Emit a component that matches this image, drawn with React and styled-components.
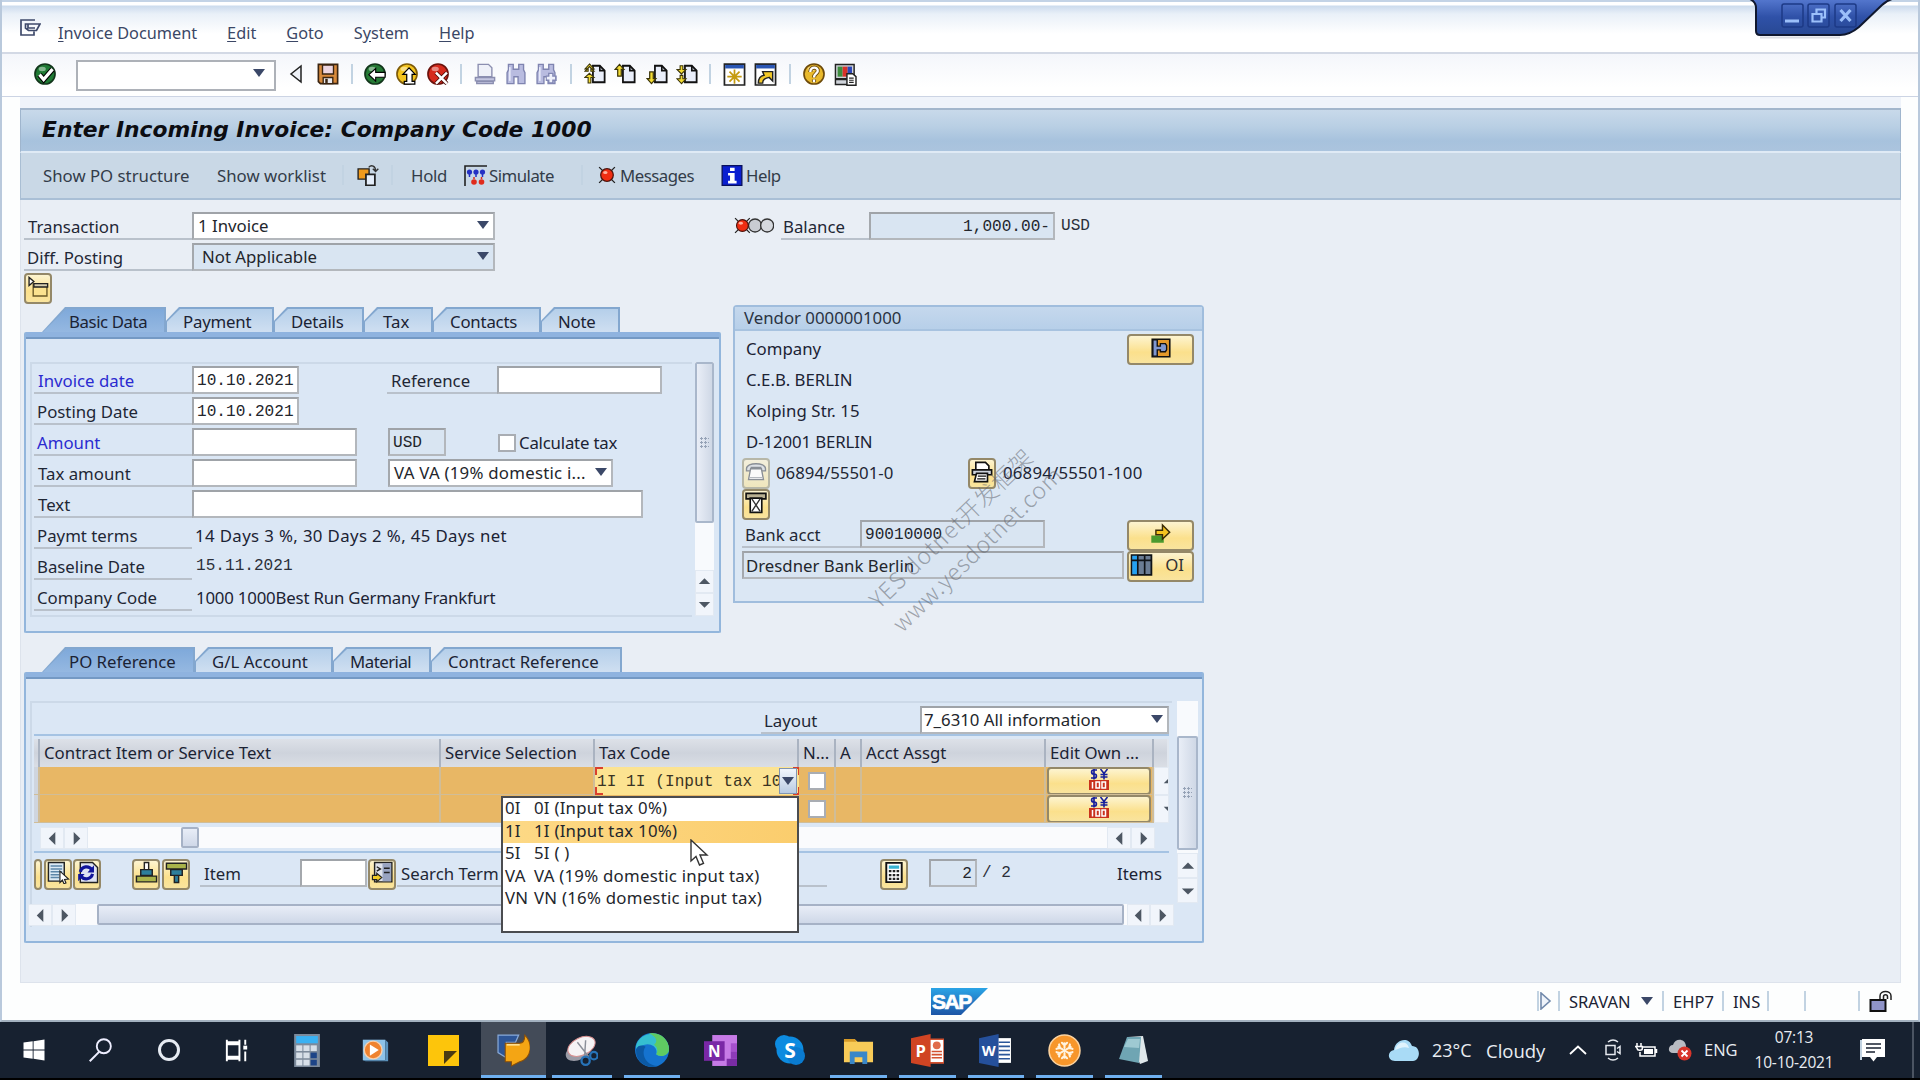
import React from 'react';
import styled, { createGlobalStyle, css } from 'styled-components';

const GlobalStyle = createGlobalStyle`
  * { box-sizing: border-box; }
  body {
    margin: 0;
    overflow: hidden;
    font-family: "Noto Sans", sans-serif;
    font-size: 16.8px;
    color: #1b2334;
  }
  svg { display: block; flex: none; }
`;

const ui = '"Noto Sans", sans-serif';
const mono = '"Liberation Mono", monospace';

// SHELL
const Screen = styled.div`
  position: relative;
  width: 1920px;
  height: 1080px;
  display: flex;
  flex-direction: column;
  overflow: hidden;
  background: #000;
  white-space: nowrap;
`;
const Window = styled.div`
  height: 1022px;
  display: flex;
  flex-direction: column;
  background: #fdfefe;
  border-left: 2px solid #b9c9dc;
  border-right: 2px solid #b9c9dc;
  border-bottom: 2px solid #a3b1bf;
`;
const MenuBar = styled.div`
  height: 54px;
  flex: none;
  display: flex;
  align-items: center;
  gap: 30px;
  padding: 11px 0 0 18px;
  color: #3b4766;
  font-size: 16.3px;
  border-top: 2px solid #c3d3e6;
  border-bottom: 2px solid #d3d9e5;
  background: linear-gradient(#fff 0 3px, #ccdbed 4px, #e9f0f8 12px, #fff 32px);
`;
const MenuIcon = styled.span`
  margin: -10px -13px 0 0;
`;
const Key = styled.span`
  text-decoration: underline;
  text-underline-offset: 2px;
`;
const ToolBar = styled.div`
  height: 43px;
  flex: none;
  display: flex;
  align-items: center;
  padding: 0 0 2px 32px;
  border-bottom: 1px solid #ccd4e4;
  background: linear-gradient(#f4f6fb, #fff 80%);
`;
const CommandField = styled.div`
  width: 200px;
  height: 31px;
  margin: 2px 13px 0 18px;
  padding: 0 9px 4px 0;
  display: flex;
  align-items: center;
  justify-content: flex-end;
  background: #fff;
  border: 2px solid #adb1b8;
`;
const Tool = styled.span`
  width: ${p => p.w || 22}px;
  margin-left: ${p => p.ml || 0}px;
`;
const Sep = styled.span`
  width: 2px;
  height: ${p => p.h || 20}px;
  flex: none;
  margin: 0 ${p => p.mr || 0}px 0 ${p => p.ml || 0}px;
  background: #c2d3e2;
`;
const Main = styled.div`
  height: 886px;
  flex: none;
  margin: 0 17px 0 18px;
  padding-top: 11px;
  background: #eff3fa;
  display: flex;
  flex-direction: column;
`;
const TitleBar = styled.div`
  height: 45px;
  flex: none;
  display: flex;
  align-items: center;
  padding: 0 0 2px 21px;
  font: italic bold 21.8px "DejaVu Sans", sans-serif;
  color: #0c0d12;
  border: 1px solid #9fb5cd;
  border-top: 2px solid #a3b6cc;
  border-bottom: 2px solid #dfeaf5;
  background: linear-gradient(#c8d9ea, #b9cfe4 40%, #a7c2dd 75%, #abc4de);
`;
const AppBar = styled.div`
  height: 47px;
  flex: none;
  display: flex;
  align-items: center;
  padding: 0 0 1px 22px;
  letter-spacing: -0.15px;
  color: #333c49;
  border: 1px solid #a9bed3;
  border-top: 0;
  border-bottom: 2px solid #a9bfd6;
  background: #c9d8e6;
`;
const AppText = styled.span`
  width: ${p => p.w}px;
  flex: none;
  margin-left: ${p => p.ml || 0}px;
  letter-spacing: ${p => p.ls || 0}px;
`;
const Content = styled.div`
  flex: 1;
  padding: 12px 0 0 3px;
  border: 1px solid #dde3ec;
  border-top: 0;
  background: #e9eef5;
`;

// FORM PARTS
const Row = styled.div`
  height: 31px;
  display: flex;
  align-items: flex-start;
`;
const Label = styled.span`
  width: ${p => p.w}px;
  height: 28px;
  flex: none;
  padding: 2px 0 0 ${p => (p.indent === undefined ? 4 : p.indent)}px;
  margin-left: ${p => p.ml || 0}px;
  line-height: 26px;
  color: ${p => (p.$blue ? '#2b2bd0' : '#1f2735')};
  ${p => !p.$plain && css`border-bottom: 2px solid #b9c1cb;`}
`;
const Field = styled.span`
  width: ${p => p.w}px;
  height: 28px;
  flex: none;
  display: flex;
  align-items: center;
  justify-content: ${p => (p.$end ? 'flex-end' : 'flex-start')};
  margin-left: ${p => p.ml || 0}px;
  padding: ${p => (p.$prose ? 0 : 2)}px 3px 0 ${p => p.indent || 3}px;
  font-family: ${p => (p.$prose ? ui : mono)};
  font-size: ${p => (p.$prose ? 16.8 : 16.1)}px;
  color: #23262c;
  background: ${p => (p.$locked ? '#d9e5f2' : '#fff')};
  border: 2px solid #b3b7bc;
  border-top-color: #9fa3a8;
  border-left-color: #a4a8ad;
`;
const Select = styled(Field)`
  justify-content: space-between;
  padding-right: ${p => p.pr || 4}px;
  padding-bottom: 2px;
  letter-spacing: ${p => p.ls || 0}px;
`;
const Mono = styled.span`
  font-family: ${mono};
  font-size: 16.1px;
  line-height: 29px;
  margin-left: ${p => p.ml || 0}px;
  color: #2b303a;
`;
const Plain = styled.span`
  line-height: 26px;
  padding-top: 2px;
  margin-left: ${p => p.ml || 0}px;
  letter-spacing: ${p => p.ls || 0}px;
`;
const Caret = styled.i`
  flex: none;
  width: 0;
  height: 0;
  border: 6px solid transparent;
  border-width: 8px 6.5px 0;
  border-top-color: #3b4868;
`;
const Check = styled.span`
  width: 18px;
  height: 18px;
  flex: none;
  background: #fff;
  border: 2px solid #a9adb3;
  margin: ${p => p.m || 0};
`;
const YellowButton = styled.span`
  width: ${p => p.w || 28}px;
  height: ${p => p.h || 31}px;
  flex: none;
  display: flex;
  align-items: center;
  justify-content: ${p => (p.$split ? 'space-between' : 'center')};
  padding: 0 ${p => (p.$split ? '8px 4px 1px' : '0 4px')};
  margin-left: ${p => p.ml || 0}px;
  overflow: hidden;
  border: 2px solid ${p => (p.$off ? '#b7b7a8' : '#948868')};
  border-radius: 4px;
  color: #333;
  background: ${p => (p.$off ? 'linear-gradient(#f3efdc, #efe6bd)' : 'linear-gradient(#fdf4d0, #fbe08c 60%, #f9e49e)')};
`;

// TABS
const TabStrip = styled.div`
  display: flex;
  height: 25px;
  padding-left: 18px;
`;
const slant = 'polygon(0 100%, 0 55%, 13px 0, 100% 0, 100% 100%)';
const slantFirst = 'polygon(0 100%, 23px 0, 100% 0, 100% 100%)';
const Tab = styled.span`
  position: relative;
  width: ${p => p.w}px;
  height: 25px;
  flex: none;
  padding-left: ${p => p.pl || (p.$active ? 27 : 17)}px;
  line-height: 29px;
  letter-spacing: ${p => (p.ls === undefined ? -0.2 : p.ls)}px;
  z-index: 0;
  clip-path: ${p => (p.$active ? slantFirst : slant)};
  background: #83a7cf;
  &::before {
    content: '';
    position: absolute;
    z-index: -1;
    inset: 2px 2px 0 1px;
    clip-path: ${p => (p.$active ? slantFirst : slant)};
    background: ${p => (p.$active ? 'linear-gradient(#7fa9da, #95b8e1)' : 'linear-gradient(#b5cfea, #cfdff1)')};
  }
`;
const TabPanel = styled.div`
  width: ${p => p.w}px;
  height: ${p => p.h}px;
  padding: ${p => p.pad};
  display: flex;
  background: #dbe7f5;
  border: 2px solid #93b6dc;
  border-top: 0;
  box-shadow: inset 0 5px 0 #8fb3df, inset 0 7px 0 #7499c4;
  border-radius: 2px;
`;

// SCROLLBARS
const VBar = styled.div`
  width: ${p => p.w}px;
  height: ${p => p.h}px;
  margin-left: ${p => p.ml || 0}px;
  display: flex;
  flex-direction: column;
  align-items: center;
  flex: none;
  background: #f8fafd;
`;
const VThumb = styled.div`
  width: 100%;
  height: ${p => p.h}px;
  margin: ${p => p.mt || 0}px 0 auto;
  display: flex;
  align-items: center;
  justify-content: center;
  border: 2px solid #a9b7cb;
  border-radius: 2px;
  background: linear-gradient(90deg, #e9eef7, #cfd8e6);
`;
const Grip = styled.i`
  width: 9px;
  height: 12px;
  background: radial-gradient(circle at 1.5px 1.5px, #95a2b6 1px, transparent 1.2px) 0 0 / 4px 4px;
`;
const ScrollBtn = styled.span`
  width: ${p => p.w || 24}px;
  height: ${p => p.h || 22}px;
  flex: none;
  display: flex;
  align-items: center;
  justify-content: ${p => (p.$cut ? 'flex-start' : 'center')};
  padding-left: ${p => (p.$cut ? 8 : 0)}px;
  overflow: hidden;
  background: #f1f5fb;
  border: 1px solid #e2e9f2;
`;
const HBar = styled.div`
  width: ${p => p.w}px;
  height: 21px;
  margin-left: ${p => p.ml || 0}px;
  margin-top: ${p => p.mt || 0}px;
  display: flex;
  background: #fafbfd;
`;
const HThumb = styled.span`
  width: ${p => p.w}px;
  height: 21px;
  margin: 0 auto 0 ${p => p.ml}px;
  border: 2px solid #a6b2c6;
  border-radius: 2px;
  background: linear-gradient(#e8edf7, #cfd8e8);
`;

// VENDOR
const Columns = styled.div`
  display: flex;
  align-items: flex-start;
`;
const Vendor = styled.div`
  width: 471px;
  height: 298px;
  margin: -2px 0 0 12px;
  background: #dbe7f4;
  border: 2px solid #a0bddd;
  border-radius: 4px 4px 0 0;
`;
const VendorHead = styled.div`
  height: 24px;
  padding-left: 9px;
  line-height: 21px;
  color: #2a3342;
  border-bottom: 2px solid #a8c3e0;
  background: linear-gradient(#c5d8ed, #b7cfe9);
`;
const VendorBody = styled.div`
  padding: 3px 8px 0 7px;
`;
const Push = styled.span`
  margin-left: auto;
`;

// TABLE
const Inner = styled.div`
  width: ${p => p.w}px;
  height: ${p => p.h}px;
  flex: none;
  padding: ${p => p.pad};
  border: 2px solid #ccd9e8;
  border-right: 0;
  border-bottom-width: ${p => (p.$open ? 0 : 2)}px;
`;
const grid = '6px 401px 154px 204px 37px 26px 184px 108px 15px';
const TableHead = styled.div`
  display: grid;
  grid-template-columns: ${grid};
  height: 28px;
  margin-top: 3px;
`;
const HeadCell = styled.span`
  padding-left: 4px;
  line-height: 27px;
  overflow: hidden;
  border-right: 2px solid ${p => (p.$end ? '#e0e6ee' : '#aab3c1')};
  background: linear-gradient(#dde1e8, #ced3dc 50%, #dadee5);
`;
const TableRow = styled.div`
  display: grid;
  grid-template-columns: ${grid};
  height: 28px;
`;
const Cell = styled.span`
  display: flex;
  align-items: center;
  overflow: hidden;
  padding-left: ${p => p.pl || 0}px;
  background: ${p => p.bg || '#e8b765'};
  border-right: 2px solid #d0bd98;
  border-bottom: 1px solid #d0bd98;
`;
const TaxInput = styled.span`
  width: 205px;
  height: 28px;
  display: flex;
  align-items: center;
  padding-left: 2px;
  font: 16.1px ${mono};
  color: #3a3423;
  background:
    linear-gradient(#d9402c, #d9402c) 0 0 / 8px 2px no-repeat,
    linear-gradient(#d9402c, #d9402c) 0 0 / 2px 8px no-repeat,
    linear-gradient(#d9402c, #d9402c) 0 100% / 8px 2px no-repeat,
    linear-gradient(#d9402c, #d9402c) 0 100% / 2px 8px no-repeat,
    linear-gradient(#d9402c, #d9402c) 100% 0 / 7px 2px no-repeat,
    linear-gradient(#d9402c, #d9402c) 100% 0 / 2px 8px no-repeat,
    linear-gradient(#d9402c, #d9402c) 100% 100% / 7px 2px no-repeat,
    linear-gradient(#d9402c, #d9402c) 100% 100% / 2px 8px no-repeat,
    #fce391;
`;
const TaxText = styled.span`
  width: 182px;
  flex: none;
  padding-top: 1px;
  letter-spacing: 0.05px;
`;
const DropBtn = styled.span`
  width: 18px;
  height: 26px;
  flex: none;
  display: flex;
  align-items: center;
  justify-content: center;
  border: 1px solid #8095b4;
  background: linear-gradient(#f2f6fc, #b9cbe2);
`;
const BlueLine = styled.div`
  height: 2px;
  background: #a5c3e3;
  margin-top: ${p => p.mt || 0}px;
`;
const Actions = styled.div`
  display: flex;
  height: 31px;
  margin-top: 6px;
`;
const DropList = styled.div`
  position: absolute;
  left: 501px;
  top: 796px;
  width: 298px;
  height: 137px;
  border: 2px solid #4a4c50;
  background: #fff;
`;
const Option = styled.div`
  height: 22.5px;
  display: flex;
  padding-left: 2px;
  line-height: 20px;
  letter-spacing: 0.25px;
  color: #23262c;
  background: ${p => (p.$on ? 'linear-gradient(90deg, #fdd986, #fbcd6d)' : 'transparent')};
`;
const Code = styled.span`
  width: 29px;
`;
const CursorLayer = styled.span`
  position: absolute;
  left: 690px;
  top: 839px;
`;
const Watermark = styled.div`
  position: absolute;
  left: 849px;
  top: 495px;
  width: 250px;
  transform: rotate(-44deg);
  font: 300 23px/33px "Noto Sans CJK SC", sans-serif;
  color: rgba(95, 100, 108, 0.55);
`;
const WatermarkLine = styled.div`
  letter-spacing: ${p => p.ls}px;
`;
const WindowControls = styled.div`
  position: absolute;
  left: 1748px;
  top: 0;
`;

// STATUS BAR
const StatusBar = styled.div`
  flex: 1;
  display: flex;
  align-items: center;
  padding: 0 25px 1px 929px;
  font-size: 16.5px;
`;
const StatusText = styled.span`
  width: ${p => p.w}px;
  margin-left: 9px;
`;

// TASKBAR
const TaskBar = styled.div`
  height: 56px;
  display: flex;
  background: #172130;
  color: #e9edf2;
`;
const Task = styled.span`
  width: ${p => p.w}px;
  height: 56px;
  flex: none;
  display: flex;
  align-items: center;
  justify-content: center;
  border: solid transparent;
  border-width: 0 6px;
  background-clip: padding-box;
  ${p => p.$running && css`
    background-image: linear-gradient(#6fb0f0, #6fb0f0);
    background-size: 100% 3px;
    background-repeat: no-repeat;
    background-position: 0 100%;
  `}
  ${p => p.$active && css`
    border-width: 0 0 0 2px;
    background-color: #434b58;
  `}
`;
const Tray = styled.div`
  margin-left: auto;
  width: 532px;
  display: flex;
  align-items: center;
  font: 17px "Open Sans", sans-serif;
`;
const TrayItem = styled.span`
  width: ${p => p.w}px;
  flex: none;
  margin-top: ${p => p.mt || 0}px;
  font-size: ${p => p.fs || 17}px;
`;
const Clock = styled.span`
  width: 84px;
  text-align: center;
  font-size: 15.5px;
  line-height: 25px;
  letter-spacing: -0.2px;
`;
const ShowDesktop = styled.span`
  width: 2px;
  height: 56px;
  margin-left: 27px;
  background: #4b5462;
`;

// ICONS
const Svg = ({ w = 22, h = w, vb = '0 0 16 16', children }) => (
  <svg width={w} height={h} viewBox={vb} fill="none">{children}</svg>
);

const Tri = ({ dir = 'left', size = 15 }) => {
  const d = {
    left: 'M11 1 V15 L4 8Z',
    right: 'M5 1 V15 L12 8Z',
    up: 'M1 11 H15 L8 4Z',
    down: 'M1 5 H15 L8 12Z',
  }[dir];
  return <Svg w={size}><path d={d} fill="#4d5763" /></Svg>;
};

const Ball = ({ color, dark, children }) => (
  <Svg>
    <circle cx="8" cy="8" r="7.3" fill={color} stroke={dark} strokeWidth="1.2" />
    <ellipse cx="6" cy="4.4" rx="2.6" ry="1.6" fill="#fff" opacity=".45" />
    {children}
  </Svg>
);
const OkIcon = () => (
  <Ball color="#1f7a34" dark="#12351b">
    <path d="M4 8.5 7 12 13.5 4.5" stroke="#000" strokeWidth="4" />
    <path d="M4 8.5 7 12 13.5 4.5" stroke="#fff" strokeWidth="2.4" />
  </Ball>
);
const BackIcon = () => (
  <Ball color="#257a35" dark="#12351b">
    <path d="M3.5 8.5 8.5 4v2.8h6.8v3.6H8.500v2.8z" fill="#fff" stroke="#000" strokeWidth=".8" />
  </Ball>
);
const ExitIcon = () => (
  <Ball color="#f3c41f" dark="#7d5a08">
    <path d="M9.500 3.500 14 8.300h-2.300v5h2v2H6v-2h1.800v-5H5z" fill="#fff" stroke="#000" strokeWidth=".9" />
  </Ball>
);
const CancelIcon = () => (
  <Ball color="#d62a1c" dark="#6b120c">
    <path d="m6.500 7 8 8m0-8-8 8" stroke="#4a0b07" strokeWidth="3" />
    <path d="m6.500 7 8 8m0-8-8 8" stroke="#fff" strokeWidth="1.800" />
  </Ball>
);
const SaveIcon = () => (
  <Svg>
    <path d="M1 1h14v14H2.500L1 13.500z" fill="#d88a3c" stroke="#3a2411" strokeWidth="1.200" />
    <path d="M4 1.500h8v6.500H4z" fill="#ecd5e0" stroke="#3a2411" />
    <path d="M4.500 10.500h7v4.500h-7z" fill="#e8e8ee" stroke="#3a2411" />
    <path d="M6 11.500h1.800v3H6z" fill="#3a2411" />
  </Svg>
);
const PrintIcon = () => (
  <Svg>
    <path d="M3 1h7.500L13 3.500V10H3z" fill="#eef0f8" stroke="#8b8eb0" />
    <path d="M1 10.500h14v2.500H1zM2 13.500h12v1.500H2z" fill="#c3c5e0" stroke="#8b8eb0" />
  </Svg>
);
const FindIcon = ({ plus }) => (
  <Svg>
    <path d="M2.500 1h3.500v3.500h4V1h3.500v4l1 2v8h-5v-5H6.500v5h-5V7l1-2z" fill="#b9bce0" stroke="#7f84b0" />
    <path d="M3.500 3v10" stroke="#e6e8f8" strokeWidth="1.200" />
    {plus && <path d="M11.500 7v8M7.800 11h8" stroke="#8287b4" strokeWidth="4" />}
    {plus && <path d="M11.500 8v6M8.600 11h6" stroke="#eef0fb" strokeWidth="2" />}
  </Svg>
);
const PageIcon = ({ kind }) => (
  <Svg>
    <path d="M6.500 2h5L15 5.500V14H6.500z" fill="#e9eefa" stroke="#111" strokeWidth="1.300" />
    <path d="M11.500 2v3.500H15" stroke="#111" strokeWidth="1.200" />
    {kind === 'first' && <path d="m4 .7 3.300 3.600H5V6h2.300L4 2.600.7 6H3V4.300H.7zM4 7.500l3.300 3H5v4H3v-4H.7z" fill="#f3dc35" stroke="#3b3408" strokeWidth=".8" />}
    {kind === 'prev' && <path d="m4 1 3.200 3.600H5.300v5H2.700v-5H.8z" fill="#f3dc35" stroke="#3b3408" strokeWidth=".9" />}
    {kind === 'next' && <path d="m4 15-3.200-3.600h1.900V6.500h2.600v4.900h1.900z" fill="#f3dc35" stroke="#3b3408" strokeWidth=".9" />}
    {kind === 'last' && <path d="M4 8 .7 4.700H3V2h2v2.700h2.300zM4 15 .7 11.500H3V9h2v2.500h2.300z" fill="#f3dc35" stroke="#3b3408" strokeWidth=".8" />}
  </Svg>
);
const SessionIcon = ({ link }) => (
  <Svg w={23}>
    <path d="M1 .8h14v14.500H1z" fill="#fff" stroke="#222" strokeWidth="1.200" />
    <path d="M1.500 1.300h13v2.500h-13z" fill="#2a56b4" />
    {link
      ? <path d="M3 14c0-3.500 1.500-5 4-5.500L6 6h7v6.500L10.500 10C7.500 10.500 6 12 6 14z" fill="#f3c928" stroke="#222" />
      : <path d="M8 4.500v10M3 9.500h10M4.500 6l7 7m0-7-7 7" stroke="#c59b10" strokeWidth="1.200" />}
  </Svg>
);
const HelpIcon = () => (
  <Ball color="#e9b92c" dark="#6d4a0a">
    <path d="M5.300 6.500c0-4.500 6-3.800 5.400-.5C10.300 8 8 7.800 8 10.500M8 12v2" stroke="#6d4a0a" strokeWidth="3" />
    <path d="M5.300 6.500c0-4.500 6-3.800 5.400-.5C10.300 8 8 7.800 8 10.500M8 12v2" stroke="#fff" strokeWidth="1.700" />
  </Ball>
);
const MonitorIcon = () => (
  <Svg w={23}>
    <path d="M1 1h13v10H1zM1 11.500h13V15H1z" fill="#cfd3da" stroke="#222" />
    <path d="M2.500 2.500h3.500v7H2.500z" fill="#3e8c3e" />
    <path d="M6 2.500h3.500v7H6z" fill="#d8322a" />
    <path d="M9.500 2.500h3v7h-3z" fill="#2b45b8" />
    <path d="M9 7.500h4l2.300 2v6H9z" fill="#fff" stroke="#222" />
    <path d="M10.500 10.500h3.200M10.500 12h3.200M10.500 13.500h3.200" stroke="#222" strokeWidth=".8" />
  </Svg>
);
const ExitBoxIcon = () => (
  <Svg w={21} h={17} vb="0 0 21 17">
    <path d="M15 1H1v15h13v-3.500M5.500 5H20l-3.500 6.500h-8L5.500 9zM8 5v4h7" stroke="#3f4a6b" strokeWidth="1.700" />
  </Svg>
);
const SwapIcon = () => (
  <Svg w={22}>
    <path d="M.8 3.500h8v7.500h-8z" fill="#f09a1c" stroke="#222" />
    <path d="M6.500 7.500h6.500v8H6.500z" fill="#e5eefa" stroke="#222" strokeWidth="1.300" />
    <path d="M8.500 2.500c2-2.500 5-1 5 2.500M11.500 3.500l2 2 2-2" stroke="#333" />
  </Svg>
);
const SimulateIcon = () => (
  <Svg w={23} h={21} vb="0 0 23 21">
    <path d="M1 21V1h22" stroke="#222" strokeWidth="1.600" />
    {[5.500, 12, 18.500].map(x => <circle key={x} cx={x} cy="7" r="2.600" fill="#2430c4" />)}
    {[5.500, 12, 18.500].map(x => <path key={x} d={`M${x} 9v3`} stroke="#2430c4" strokeWidth="1.500" />)}
    {[10, 17.500].map(x => <circle key={x} cx={x} cy="17" r="2.800" fill="#e02b1c" />)}
    <path d="M10 12v2M17.500 12v2" stroke="#e02b1c" strokeWidth="1.500" />
  </Svg>
);
const RedLight = () => (
  <>
    <path d="m1 1 14 14M15 1 1 15" stroke="#222" strokeWidth="1.200" />
    <circle cx="8" cy="8" r="5.600" fill="#ef2d12" stroke="#4b120b" strokeWidth="1.100" />
    <ellipse cx="6.500" cy="5.800" rx="2" ry="1.400" fill="#ffb09c" />
  </>
);
const InfoIcon = () => (
  <Svg w={22} h={21}>
    <path d="M.5.5h15v15H.5z" fill="#0a1fd0" stroke="#08105c" />
    <path d="M6.500 2h3.500v2.500H6.500zM5 6h5v6h1.500v2H5v-2h1.500V8H5z" fill="#fff" />
  </Svg>
);
const LightsIcon = () => (
  <Svg w={40} h={17} vb="0 0 38 16">
    <circle cx="20" cy="8" r="6.200" fill="#c9ccd2" stroke="#333" strokeWidth="1.300" />
    <circle cx="31.500" cy="8" r="6.200" fill="#d6d9de" stroke="#333" strokeWidth="1.300" />
    <RedLight />
  </Svg>
);
const CollapseIcon = () => (
  <Svg w={22} h={22}>
    <path d="M4.500 6h10v8.500h-10z" fill="#fbe28f" stroke="#6b5a28" />
    <path d="M5 5.500h10V8H5z" fill="#d6cdb0" stroke="#222" />
    <path d="M1.500 1v6L5 4z" fill="#fff" stroke="#222" />
  </Svg>
);
const CardIcon = () => (
  <Svg w={20}>
    <path d="M1 1h14v14H1z" fill="#e59a2a" stroke="#111" strokeWidth="1.300" />
    <path d="M1.500 1.500h3.500v5h2.500V4.500h4l1 1.500v3.500l-1 1.500h-4V9.500H5v5H1.500z" fill="#7f97cf" stroke="#111" strokeWidth="1.100" />
  </Svg>
);
const PhoneIcon = () => (
  <Svg w={22} h={19} vb="0 0 16 14">
    <path d="M1 5c0-5 14-5 14 0v1.500h-3.500V4h-7v2.500H1z" fill="#dde1e6" stroke="#8a8f96" />
    <path d="M4 5h8l1.500 8h-11z" fill="#fafafa" stroke="#8a8f96" />
    <path d="M3 11.500h10" stroke="#b5b9bf" />
  </Svg>
);
const FaxIcon = () => (
  <Svg w={22}>
    <path d="M3.500 6V1h7L13 3.500V6" fill="#fff" stroke="#111" strokeWidth="1.200" />
    <path d="M1 6.500h14V10H1z" fill="#cdd3dd" stroke="#111" strokeWidth="1.200" />
    <path d="M4 9h8v6H2.500z" fill="#fff" stroke="#111" strokeWidth="1.200" />
    <path d="M5 11h6M4.500 13h6" stroke="#111" />
  </Svg>
);
const MailIcon = () => (
  <Svg w={22}>
    <path d="M.8 1h14.400v4H.8z" fill="#b9b092" stroke="#111" strokeWidth="1.200" />
    <path d="M3.800 4.500h8.400v10.300H3.800z" fill="#fff" stroke="#111" strokeWidth="1.200" />
    <path d="m5 5 3 4.500 3-4.500M5 14l3-4.500 3 4.500" stroke="#333" />
  </Svg>
);
const GoIcon = () => (
  <Svg w={21}>
    <path d="M1 9.500h9.500V15H1z" fill="#4b9a2e" />
    <path d="M4.500 5.500h5V1.500L15 7l-5.500 5.200V9h-5z" fill="#f6c31f" stroke="#3a2b04" strokeWidth="1.100" />
  </Svg>
);
const ItemsIcon = () => (
  <Svg w={23} h={22}>
    <path d="M.8.8h14.400v14.400H.8z" fill="#6b7d94" stroke="#101418" strokeWidth="1.300" />
    <path d="M1.300 1.300h3.500v13.400H1.300z" fill="#25a2f2" />
    <path d="M5.300 1v14M10.300 1v14M1 4.600h14" stroke="#101418" strokeWidth="1.200" />
  </Svg>
);
const CurrencyIcon = () => (
  <Svg w={20} h={22} vb="0 0 20 22">
    <path d="M8 2H4.500C2 2 2 6 4.500 6h1C8 6 8 10 5.500 10H2M5 .5V11.500" stroke="#17209c" strokeWidth="1.700" />
    <path d="m11.500 1 3.500 4.500L18.500 1M15 5v6.500M11.500 6.500h7M11.500 9h7" stroke="#17209c" strokeWidth="1.600" />
    <path d="M0 12h20v10H0z" fill="#c9321c" />
    <path d="M3.500 14v6.500M7 14h3.500v6H7zM13 14h3.500v6H13z" stroke="#fff" strokeWidth="1.500" />
  </Svg>
);
const ListIcon = () => (
  <Svg w={23} h={23}>
    <path d="M1 1h11v13H1z" fill="#dceaf5" stroke="#222" />
    <path d="M2.500 3.500h8M2.500 5.500h8M2.500 7.500h8M2.500 9.500h6M2.500 11.500h6" stroke="#5c86a8" />
    <path d="m9 7 6 5.500-2.800.3 1 2.500-1.400.5-1.100-2.500L9 15z" fill="#fff" stroke="#222" strokeWidth=".8" />
  </Svg>
);
const RefreshIcon = () => (
  <Svg w={23} h={23}>
    <path d="M3 1h8.500L15 4.500V15H3z" fill="#dfe3f2" stroke="#222" />
    <path d="M3 7.500C4 3.500 9 3 11 6M11.500 9c-1 4-6 4.500-8 1.500" stroke="#10149a" strokeWidth="2.200" />
    <path d="M12.500 3v5H8zM1.500 14V9H6z" fill="#10149a" />
  </Svg>
);
const SortIcon = ({ down }) => (
  <Svg w={23} h={23}>
    <g transform={down ? 'matrix(1 0 0 -1 0 16)' : undefined}>
      <path d="M6.500 1h3v5h-3z" fill={down ? '#2d7c98' : '#fff'} stroke="#222" />
      <path d="M4 6h8v4H4z" fill="#2d7f9c" stroke="#222" />
      <path d="M1 10.500h14v4H1z" fill="#a9b34a" stroke="#222" />
    </g>
  </Svg>
);
const PositionIcon = () => (
  <Svg w={23} h={23}>
    <path d="M2.500 1h12v13.500h-12z" fill="#dfe2ea" stroke="#222" />
    <path d="M8 1.500h6V14H8z" fill="#98a3c0" />
    <path d="M9 5h4M9 8h4M4 4l2.500 1.500L4 7" stroke="#222" />
    <path d="M1 10h3V8.500L7.500 11.500 4 14.500V13H1z" fill="#f3cd25" stroke="#222" strokeWidth=".8" />
  </Svg>
);
const CalcIcon = () => (
  <Svg w={18} h={23} vb="0 0 14 17">
    <path d="M1 1h12v15H1z" fill="#fff" stroke="#111" strokeWidth="1.500" />
    <path d="M3 3h8v2.500H3z" fill="#39b3d1" />
    <path d="M3 7.500h8M3 10.500h8M3 13.500h8" stroke="#222" strokeWidth="1.700" strokeDasharray="2 1" />
  </Svg>
);
const LockIcon = () => (
  <Svg w={24} h={22} vb="0 0 24 22">
    <path d="M11 10V6c0-6 11-6 11 0v4M14.500 10V6.500c0-2.500 4-2.500 4 0V9" stroke="#222" strokeWidth="1.500" />
    <path d="M1.500 10h15v11h-15z" fill="#9094c8" stroke="#111" strokeWidth="2" />
  </Svg>
);
const SapLogo = () => (
  <svg width="57" height="27" viewBox="0 0 57 27">
    <defs>
      <linearGradient id="sap" x1="0" y1="0" x2="0" y2="1">
        <stop offset="0" stopColor="#2ba4e6" />
        <stop offset="1" stopColor="#1c55a6" />
      </linearGradient>
    </defs>
    <path d="M0 0H57L30 27H0z" fill="url(#sap)" />
    <text x="1" y="21" fontFamily="Liberation Sans, sans-serif" fontWeight="bold" fontSize="21" letterSpacing="-1.5" fill="#fff" stroke="#fff" strokeWidth=".7">SAP</text>
  </svg>
);
const ControlsShape = () => (
  <svg width="150" height="42" viewBox="0 0 150 42" fill="none">
    <defs>
      <linearGradient id="ctl" x1="0" y1="0" x2="0" y2="1">
        <stop offset="0" stopColor="#5578cf" />
        <stop offset=".5" stopColor="#2f51a8" />
        <stop offset="1" stopColor="#284893" />
      </linearGradient>
    </defs>
    <path d="M12 37.500h80" stroke="#b9bdc8" strokeWidth="2" opacity=".5" />
    <path d="M2-1C6 1 8 3 8 8v23c0 3 1 4 4 4h80c8 0 13-3 19-8L134 5c4-4 7-5 10-6z" fill="url(#ctl)" stroke="#10182f" strokeWidth="2" />
    <g stroke="#1d3a86" strokeWidth="1.500">
      <rect x="34" y="4" width="21" height="23" rx="2" />
      <rect x="60" y="4" width="21" height="23" rx="2" />
      <rect x="87" y="4" width="21" height="23" rx="2" />
    </g>
    <g stroke="#9cc0fa" strokeWidth="2.200">
      <path d="M37 21h14" strokeWidth="3" />
      <path d="M64.500 14h9v7.500h-9zM68.500 13V9.500h8.500v8h-3" />
      <path d="m92.500 10 10 11m0-11-10 11" strokeWidth="3.200" />
    </g>
  </svg>
);
const Cursor = () => (
  <svg width="19" height="28" viewBox="0 0 19 28">
    <path d="M1 1v21l5-4.500 3.500 8.500 4-1.700L10 16h7z" fill="#fff" stroke="#333" strokeWidth="1.400" />
  </svg>
);

// taskbar drawings, all on a 32 unit square
const taskIcons = {
  windows: <><path d="M4 7.500 14.500 6v9.500H4zM15.500 5.900 28 4v11.500H15.500zM4 16.500h10.500V26L4 24.500zM15.500 16.500H28V28l-12.500-1.900z" fill="#fff" /></>,
  search: <><circle cx="19" cy="12" r="7.500" stroke="#eef" strokeWidth="2" /><path d="M14 18 4 28" stroke="#eef" strokeWidth="2.200" /></>,
  cortana: <circle cx="16" cy="16" r="9.500" stroke="#e6ebf2" strokeWidth="3" />,
  view: <><path d="M5 9.500h13v13H5zM5 5v2.500h13V5M5 27v-2.500h13V27M24 5v5M24 17v10" stroke="#fff" strokeWidth="2" /><path d="M22 11h4v4h-4z" fill="#fff" /></>,
  calc: <><path d="M4 0h25v32H4z" fill="#7c8a9b" /><path d="M6 2h21v7H6z" fill="#39b1f3" />{[11, 18, 25].map(y => [6, 13, 20].map(x => <path key={x + '-' + y} d={`M${x} ${y}h6v5.500h-6z`} fill={x === 20 && y > 11 ? '#1d4487' : '#d7dfe8'} />))}</>,
  player: <><path d="M3 5h24v22H3z" fill="#8ec3e8" /><path d="M27 5l3 3v20H6l-3-1h24z" fill="#5b93bd" /><circle cx="14" cy="16" r="9.500" fill="#ef8330" stroke="#f6d0ae" strokeWidth="1.500" /><path d="m10.500 10 9.500 6-9.500 6z" fill="#fff" /></>,
  sticky: <><path d="M0 1h31v31H0z" fill="#fdc50b" /><path d="M16 17h13L16 30z" fill="#4a3a12" /></>,
  sap: <><path d="M1 1h20l-3 7H9v15l-8-5z" fill="#2d5596" stroke="#88a9d8" strokeWidth="1.200" /><path d="M8 9h14c3 0 5-3 5-8 8 8 7 22-5 26l-8 4v-4H8z" fill="#f4a514" stroke="#8a4f08" /><path d="M9.500 10.500H22" stroke="#fde39a" strokeWidth="1.500" /></>,
  snip: <><ellipse cx="13" cy="17" rx="13" ry="8" transform="rotate(-25 13 17)" fill="#9a9ba6" /><ellipse cx="16" cy="12" rx="14" ry="8.500" transform="rotate(-25 16 12)" fill="#f5f3f5" stroke="#d89090" /><path d="m12 8 11 14M20 6l-1 16" stroke="#8b8f99" strokeWidth="1.400" /><circle cx="20" cy="26" r="4" stroke="#2773b8" strokeWidth="2.200" /><circle cx="28" cy="21" r="3.600" stroke="#2773b8" strokeWidth="2.200" /></>,
  edge: <><circle cx="16" cy="16" r="16" fill="#1573cf" /><path d="M1 12C5-4 31-3 32 15c0 7-9 8-12 5 2-7-6-11-11-9-4 1-7 4-8 8z" fill="#35bfd0" /><path d="M16 0c10 0 16 8 16 15 0 7-9 8-12 5 2-3 1-7-2-9C22 8 20 3 13 .5z" fill="#5fcb62" /><path d="M10 13c-5 6 0 18 12 18C10 35 0 26 1 15c2-4 6-4 9-2z" fill="#0c59a4" /></>,
  onenote: <><path d="M8 1h25v30H8z" fill="#c67ae6" /><path d="M26 9h7v8h-7z" fill="#a650cd" /><path d="M26 17h7v7h-7z" fill="#8e3bb8" /><path d="M22 24h11v7H22z" fill="#7a2ca4" /><path d="M0 7h20v19H0z" fill="#7a28a6" /><text x="10" y="22" fontFamily="Open Sans" fontWeight="bold" fontSize="15" textAnchor="middle" fill="#fff">N</text></>,
  skype: <><circle cx="16" cy="16" r="13.500" fill="#0d8be0" /><circle cx="10" cy="10" r="9" fill="#0d8be0" /><circle cx="22" cy="22" r="9" fill="#0a7bd0" /><text x="16" y="23.500" fontFamily="Open Sans" fontWeight="bold" fontSize="21" textAnchor="middle" fill="#fff">S</text></>,
  folder: <><path d="M1 4h11l3 3h16v21H1z" fill="#f8cb58" /><path d="M1 4h11l2 3H1z" fill="#d79a27" /><path d="M7 17h18v13h-5v-7h-8v7H7z" fill="#3a87c8" /></>,
  ppt: <><path d="M17 5h15v23H17z" fill="#fff" stroke="#d35230" strokeWidth="1.500" /><path d="M20 17h10M20 20h10M20 23h10" stroke="#d35230" strokeWidth="1.500" /><circle cx="25" cy="11" r="3.800" fill="#e06b4a" /><path d="M0 4 19 0v32L0 28z" fill="#d04423" /><text x="9.500" y="22" fontFamily="Open Sans" fontWeight="bold" fontSize="16" textAnchor="middle" fill="#fff">P</text></>,
  word: <><path d="M17 4h14v24H17z" fill="#fff" /><path d="M19 8h11M19 12h11M19 16h11M19 20h11M19 24h11" stroke="#2b579a" strokeWidth="1.500" /><path d="M0 4 19 0v32L0 28z" fill="#25509b" /><text x="9.500" y="21.500" fontFamily="Open Sans" fontWeight="bold" fontSize="14" textAnchor="middle" fill="#fff">W</text></>,
  flower: <><circle cx="16" cy="16" r="15" fill="#f7962b" stroke="#fbd3a0" strokeWidth="1.500" />{[0, 60, 120, 180, 240, 300].map(a => <path key={a} transform={`rotate(${a} 16 16)`} d="M16 13.500V9M13.500 8.500l2.500 2.500 2.500-2.500" stroke="#fff3df" strokeWidth="2" strokeLinecap="round" />)}<circle cx="16" cy="16" r="1.800" fill="#fff3df" /></>,
  notepad: <><path d="m10 3 15-1 5 25-8 3z" fill="#dfe7ea" /><path d="M9 3h14l-2 26L1 25z" fill="#6fa5b3" /><path d="M10 5h12l-1 9-15-1z" fill="#9ec9d2" /></>,
};

const tasks = [
  { name: 'windows', size: 28, w: 67.5 },
  { name: 'search', size: 30, w: 67.5 },
  { name: 'cortana', size: 32, w: 67.5 },
  { name: 'view', size: 31, w: 69 },
  { name: 'calc', size: 33, w: 69.500 },
  { name: 'player', size: 30 },
  { name: 'sticky', size: 32 },
  { name: 'sap', size: 33, w: 67.5, active: true },
  { name: 'snip', size: 33, running: true, w: 71.5 },
  { name: 'edge', size: 34, running: true },
  { name: 'onenote', size: 33 },
  { name: 'skype', size: 32 },
  { name: 'folder', size: 31, running: true },
  { name: 'ppt', size: 33, running: true },
  { name: 'word', size: 33, running: true },
  { name: 'flower', size: 33, running: true },
  { name: 'notepad', size: 32, running: true },
];

const menus = ['Invoice Document', 'Edit', 'Goto', 'System', 'Help'];
const options = [
  ['0I', '0I (Input tax 0%)'],
  ['1I', '1I (Input tax 10%)'],
  ['5I', '5I ( )'],
  ['VA', 'VA (19% domestic input tax)'],
  ['VN', 'VN (16% domestic input tax)'],
];

const Menu = () => (
  <MenuBar>
    <MenuIcon><ExitBoxIcon /></MenuIcon>
    {menus.map(m => (
      <span key={m}>
        {m === 'System' ? <>S<Key>y</Key>stem</> : <><Key>{m[0]}</Key>{m.slice(1)}</>}
      </span>
    ))}
  </MenuBar>
);

const Tools = () => (
  <ToolBar>
    <Tool w={24}><OkIcon /></Tool>
    <CommandField><Caret /></CommandField>
    <Tool w={14}><Svg w={14} h={20} vb="0 0 14 20"><path d="M12 2v16L2 10z" fill="#eef1f7" stroke="#222" strokeWidth="1.500" /></Svg></Tool>
    <Tool ml={14}><SaveIcon /></Tool>
    <Sep ml={12} mr={11} />
    <Tool><BackIcon /></Tool>
    <Tool ml={10}><ExitIcon /></Tool>
    <Tool ml={9}><CancelIcon /></Tool>
    <Sep ml={11} mr={12} />
    <Tool><PrintIcon /></Tool>
    <Tool ml={9}><FindIcon /></Tool>
    <Tool ml={8}><FindIcon plus /></Tool>
    <Sep ml={13} mr={12} />
    <Tool><PageIcon kind="first" /></Tool>
    <Tool ml={8}><PageIcon kind="prev" /></Tool>
    <Tool ml={10}><PageIcon kind="next" /></Tool>
    <Tool ml={8}><PageIcon kind="last" /></Tool>
    <Sep ml={11} mr={12} />
    <Tool><SessionIcon /></Tool>
    <Tool ml={9}><SessionIcon link /></Tool>
    <Sep ml={13} mr={12} />
    <Tool><HelpIcon /></Tool>
    <Tool ml={9}><MonitorIcon /></Tool>
  </ToolBar>
);

const ApplicationBar = () => (
  <AppBar>
    <AppText w={174}>Show PO structure</AppText>
    <AppText w={125}>Show worklist</AppText>
    <Sep mr={13} />
    <SwapIcon />
    <Sep ml={12} mr={18} />
    <AppText w={53} ls={-0.3}>Hold</AppText>
    <SimulateIcon />
    <AppText ml={2} w={92} ls={-0.5}>Simulate</AppText>
    <Sep mr={15} />
    <Svg w={18} h={20}><RedLight /></Svg>
    <AppText ml={4} w={101} ls={-0.5}>Messages</AppText>
    <InfoIcon />
    <AppText ml={3} w={40} ls={-0.5}>Help</AppText>
  </AppBar>
);

const HeaderForm = () => (
  <>
    <Row>
      <Label w={168}>Transaction</Label>
      <Select w={303} $prose indent={4}>1 Invoice<Caret /></Select>
      <Label w={47} ml={239} indent={0} $plain><Svg w={40} h={24} vb="0 0 40 24"><g transform="translate(0 3)"><LightsIcon /></g></Svg></Label>
      <Label w={88} indent={2}>Balance</Label>
      <Field w={186} $locked $end>1,000.00-</Field>
      <Mono ml={6}>USD</Mono>
    </Row>
    <Row>
      <Label w={168} indent={3}>Diff. Posting</Label>
      <Select w={303} $prose $locked indent={8}>Not Applicable<Caret /></Select>
    </Row>
    <Lift><YellowButton><CollapseIcon /></YellowButton></Lift>
  </>
);

const BasicData = () => (
  <div>
    <TabStrip>
      <Tab $active w={124} ls={-0.4}>Basic Data</Tab>
      <Tab w={108}>Payment</Tab>
      <Tab w={90}>Details</Tab>
      <Tab w={69} pl={19} ls={0}>Tax</Tab>
      <Tab w={108}>Contacts</Tab>
      <Tab w={79}>Note</Tab>
    </TabStrip>
    <TabPanel w={697} h={301} pad="30px 0 0 4px">
      <Inner w={662} h={255} pad="2px 0 0 2px">
        <Row>
          <Label w={158} $blue>Invoice date</Label>
          <Field w={107}>10.10.2021</Field>
          <Label w={110} ml={88}>Reference</Label>
          <Field w={165} />
        </Row>
        <Row>
          <Label w={158} indent={3}>Posting Date</Label>
          <Field w={107}>10.10.2021</Field>
        </Row>
        <Row>
          <Label w={158} indent={3} $blue>Amount</Label>
          <Field w={165} />
          <Field w={58} ml={31} $locked>USD</Field>
          <Check m="6px 3px 0 52px" />
          <Plain ls={-0.2}>Calculate tax</Plain>
        </Row>
        <Row>
          <Label w={158}>Tax amount</Label>
          <Field w={165} />
          <Select w={225} ml={31} $prose indent={4} pr={4} ls={0.25}>VA VA (19% domestic i...<Caret /></Select>
        </Row>
        <Row>
          <Label w={158}>Text</Label>
          <Field w={451} />
        </Row>
        <Row>
          <Label w={158} indent={3}>Paymt terms</Label>
          <Plain ml={3} ls={0.38}>14 Days 3 %, 30 Days 2 %, 45 Days net</Plain>
        </Row>
        <Row>
          <Label w={158} indent={3}>Baseline Date</Label>
          <Mono ml={4}>15.11.2021</Mono>
        </Row>
        <Row>
          <Label w={158} indent={3}>Company Code</Label>
          <Plain ml={4} ls={-0.18}>1000 1000Best Run Germany Frankfurt</Plain>
        </Row>
      </Inner>
      <VBar w={19} h={254} ml={3}>
        <VThumb h={161}><Grip /></VThumb>
        <ScrollBtn w={19} h={23}><Tri dir="up" size={13} /></ScrollBtn>
        <ScrollBtn w={19} h={23}><Tri dir="down" size={13} /></ScrollBtn>
      </VBar>
    </TabPanel>
  </div>
);

const VendorBox = () => (
  <Vendor>
    <VendorHead>Vendor 0000001000</VendorHead>
    <VendorBody>
      <Row>
        <Plain ml={4}>Company</Plain>
        <Push><YellowButton w={67}><CardIcon /></YellowButton></Push>
      </Row>
      <Row><Plain ml={4}>C.E.B. BERLIN</Plain></Row>
      <Row><Plain ml={4} ls={0.1}>Kolping Str. 15</Plain></Row>
      <Row><Plain ml={4} ls={-0.1}>D-12001 BERLIN</Plain></Row>
      <Row>
        <YellowButton $off><PhoneIcon /></YellowButton>
        <Label w={192} ml={2} $plain>06894/55501-0</Label>
        <YellowButton ml={4}><FaxIcon /></YellowButton>
        <Plain ml={7} ls={0.2}>06894/55501-100</Plain>
      </Row>
      <Row><YellowButton><MailIcon /></YellowButton></Row>
      <Row>
        <Label w={118} indent={3}>Bank acct</Label>
        <Field w={185} $locked>90010000</Field>
        <Push><YellowButton w={67}><GoIcon /></YellowButton></Push>
      </Row>
      <Row>
        <Field w={382} $locked $prose indent={2}>Dresdner Bank Berlin</Field>
        <Push><YellowButton w={67} $split><ItemsIcon /><span>OI</span></YellowButton></Push>
      </Row>
    </VendorBody>
  </Vendor>
);

const ItemRow = ({ first }) => (
  <TableRow>
    <Cell bg="#cfd5de" />
    <Cell />
    <Cell />
    {first
      ? <TaxInput><TaxText>1I 1I (Input tax 10</TaxText><DropBtn><Caret /></DropBtn></TaxInput>
      : <Cell />}
    <Cell pl={9}><Check /></Cell>
    <Cell />
    <Cell />
    <Cell><YellowButton w={104} h={28} ml={1}><CurrencyIcon /></YellowButton></Cell>
    <ScrollBtn $cut w={15} h={28}><Tri dir={first ? 'up' : 'down'} size={12} /></ScrollBtn>
  </TableRow>
);

const PoReference = () => (
  <div>
    <TabStrip>
      <Tab $active w={153} ls={0}>PO Reference</Tab>
      <Tab w={138} ls={0.05}>G/L Account</Tab>
      <Tab w={98} ls={-0.5}>Material</Tab>
      <Tab w={191} ls={0}>Contract Reference</Tab>
    </TabStrip>
    <TabPanel w={1180} h={271} pad="29px 0 0 4px">
      <Inner w={1142} h={226} pad="3px 3px 0 2px" $open>
        <Row>
          <Label w={159} ml={727} indent={3}>Layout</Label>
          <Select w={249} $prose indent={2} pr={0}>7_6310 All information<Caret /></Select>
        </Row>
        <BlueLine mt={-3} />
        <TableHead>
          <HeadCell />
          <HeadCell>Contract Item or Service Text</HeadCell>
          <HeadCell>Service Selection</HeadCell>
          <HeadCell>Tax Code</HeadCell>
          <HeadCell>N...</HeadCell>
          <HeadCell>A</HeadCell>
          <HeadCell>Acct Assgt</HeadCell>
          <HeadCell>Edit Own ...</HeadCell>
          <HeadCell $end />
        </TableHead>
        <ItemRow first />
        <ItemRow />
        <HBar w={1115} ml={6} mt={4}>
          <ScrollBtn><Tri /></ScrollBtn>
          <ScrollBtn><Tri dir="right" /></ScrollBtn>
          <HThumb w={18} ml={93} />
          <ScrollBtn><Tri /></ScrollBtn>
          <ScrollBtn><Tri dir="right" /></ScrollBtn>
        </HBar>
        <BlueLine mt={3} />
        <Actions>
          <YellowButton w={8} />
          <YellowButton ml={2}><ListIcon /></YellowButton>
          <YellowButton ml={1}><RefreshIcon /></YellowButton>
          <YellowButton ml={31}><SortIcon /></YellowButton>
          <YellowButton ml={2}><SortIcon down /></YellowButton>
          <Label w={100} ml={10}>Item</Label>
          <Field w={67} />
          <YellowButton ml={1}><PositionIcon /></YellowButton>
          <Label w={430} ml={1}>Search Term</Label>
          <YellowButton ml={53}><CalcIcon /></YellowButton>
          <Field w={48} ml={21} $locked $end>2</Field>
          <Mono ml={5}>/ 2</Mono>
          <Plain ml={106}>Items</Plain>
        </Actions>
        <HBar w={1146} ml={-6} mt={14}>
          <ScrollBtn><Tri /></ScrollBtn>
          <ScrollBtn><Tri dir="right" /></ScrollBtn>
          <HThumb w={1027} ml={21} />
          <ScrollBtn w={23}><Tri /></ScrollBtn>
          <ScrollBtn><Tri dir="right" /></ScrollBtn>
        </HBar>
      </Inner>
      <VBar w={21} h={202} ml={5}>
        <VThumb h={114} mt={35}><Grip /></VThumb>
        <ScrollBtn w={21} h={25}><Tri dir="up" size={14} /></ScrollBtn>
        <ScrollBtn w={21} h={25}><Tri dir="down" size={14} /></ScrollBtn>
      </VBar>
    </TabPanel>
  </div>
);

const Spacer = styled.div`
  height: ${p => p.h}px;
`;
const Lift = styled.div`
  display: flex;
  margin-top: -1px;
`;

const App = () => (
  <Screen>
    <GlobalStyle />
    <Window>
      <Menu />
      <Tools />
      <Main>
        <TitleBar>Enter Incoming Invoice: Company Code 1000</TitleBar>
        <ApplicationBar />
        <Content>
          <HeaderForm />
          <Spacer h={3} />
          <Columns>
            <BasicData />
            <VendorBox />
          </Columns>
          <Spacer h={14} />
          <PoReference />
        </Content>
      </Main>
      <StatusBar>
        <SapLogo />
        <Sep h={0} ml={549} />
        <Svg w={13} h={18} vb="0 0 13 18"><path d="M2 1v16l9-8z" fill="#eef3fa" stroke="#7189ab" strokeWidth="1.600" /></Svg>
        <Sep ml={6} />
        <StatusText w={72}>SRAVAN</StatusText>
        <Caret />
        <Sep ml={9} />
        <StatusText w={49}>EHP7</StatusText>
        <Sep />
        <StatusText w={34}>INS</StatusText>
        <Sep mr={35} />
        <Sep mr={52} />
        <Sep mr={9} />
        <LockIcon />
      </StatusBar>
    </Window>
    <TaskBar>
      {tasks.map(t => (
        <Task key={t.name} w={t.w || 68.800} $active={t.active} $running={t.running || t.active}>
          <Svg w={t.size} vb="0 0 32 32">{taskIcons[t.name]}</Svg>
        </Task>
      ))}
      <Tray>
        <TrayItem w={44}>
          <Svg w={32} h={24} vb="0 0 32 24"><path d="M7 23C-1 23-1 13 6 12 7 1 21-2 24 8c9 0 9 14 1 15z" fill="#a9dbf6" /><path d="M7 12c2-9 12-10 14-2-6-2-10 1-14 2z" fill="#dff3fd" /></Svg>
        </TrayItem>
        <TrayItem w={54} fs={18}>23°C</TrayItem>
        <TrayItem w={83} fs={18.5}>Cloudy</TrayItem>
        <TrayItem w={35}><Svg w={18} h={10} vb="0 0 18 10"><path d="m1 9 8-7.500L17 9" stroke="#fff" strokeWidth="1.800" /></Svg></TrayItem>
        <TrayItem w={31}><Svg w={18} h={22} vb="0 0 18 22"><path d="M2 6.500h9v9H2zM13 9.500l3-2v7l-3-2M4 3c3-2.500 7-2.500 10 0M4 19c3 2.500 7 2.500 10 0" stroke="#e6e9ee" strokeWidth="1.500" /></Svg></TrayItem>
        <TrayItem w={33}><Svg w={23} h={17} vb="0 0 23 17"><path d="M7 5h13v9H5v-4M2 1v3M6 1v3M.800 4.500h6.500v2.200c0 2-5 2-5 0z M21.500 7v4" stroke="#fff" strokeWidth="1.500" /><path d="M9 7h9v5H9z" fill="#fff" /></Svg></TrayItem>
        <TrayItem w={36}><Svg w={24} h={22} vb="0 0 24 22"><path d="M5 14C-1 14 0 6 5 6 7-1 17-1 18 7v7z" fill="#b9bcc2" /><circle cx="16.500" cy="14.500" r="7" fill="#d8352a" /><path d="m13.500 11.500 6 6m0-6-6 6" stroke="#fff" strokeWidth="1.800" /></Svg></TrayItem>
        <TrayItem w={48} fs={16.500} mt={-2}>ENG</TrayItem>
        <Clock>07:13<br />10-10-2021</Clock>
        <Sep h={0} ml={24} />
        <Svg w={23} h={23} vb="0 0 23 23"><path d="M0 0h23v18h-8l-3.500 4.500L8 18H0z" fill="#fff" /><path d="M4 5h15M4 9h15M4 13h9" stroke="#172130" strokeWidth="1.700" /></Svg>
        <ShowDesktop />
      </Tray>
    </TaskBar>
    <DropList>
      {options.map(([code, text]) => (
        <Option key={code} $on={code === '1I'}><Code>{code}</Code>{text}</Option>
      ))}
    </DropList>
    <CursorLayer><Cursor /></CursorLayer>
    <Watermark>
      <WatermarkLine ls={0.9}>YES dotnet开发框架</WatermarkLine>
      <WatermarkLine ls={0.8}>www.yesdotnet.com</WatermarkLine>
    </Watermark>
    <WindowControls><ControlsShape /></WindowControls>
  </Screen>
);

export default App;
